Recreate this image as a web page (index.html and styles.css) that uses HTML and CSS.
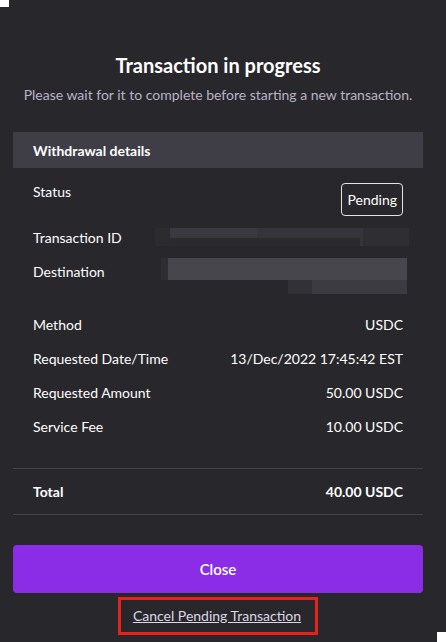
FILE: index.html
```html
<!DOCTYPE html>
<html>
<head>
<meta charset="utf-8">
<link rel="stylesheet" href="styles.css">
</head>
<body>
<div class="corner corner-tl"></div>
<div class="modal">
  <h1 class="title">Transaction in progress</h1>
  <p class="subtitle">Please wait for it to complete before starting a new transaction.</p>
  <div class="section-head">Withdrawal details</div>
  <div class="rows">
    <div class="row row-status">
      <span class="label">Status</span>
      <span class="badge">Pending</span>
    </div>
    <div class="row row-txid">
      <span class="label">Transaction ID</span>
      <span class="blur blur-txid"><i class="b1"></i><i class="b2"></i></span>
    </div>
    <div class="row row-dest">
      <span class="label">Destination</span>
      <span class="blur blur-dest"><i class="d1"></i><i class="d2"></i></span>
    </div>
    <div class="row"><span class="label">Method</span><span class="value">USDC</span></div>
    <div class="row"><span class="label">Requested Date/Time</span><span class="value">13/Dec/2022 17:45:42 EST</span></div>
    <div class="row"><span class="label">Requested Amount</span><span class="value">50.00 USDC</span></div>
    <div class="row"><span class="label">Service Fee</span><span class="value">10.00 USDC</span></div>
  </div>
  <div class="total">
    <span class="label">Total</span>
    <span class="value">40.00 USDC</span>
  </div>
  <button class="close-btn">Close</button>
  <div class="cancel-wrap">
    <a class="cancel" href="#">Cancel Pending Transaction</a>
  </div>
</div>
<div class="corner corner-br"></div>
</body>
</html>
```
FILE: styles.css
```css
html, body {
  margin: 0;
  padding: 0;
}
body {
  width: 446px;
  height: 642px;
  background: #28272c;
  font-family: Lato, "Noto Sans", sans-serif;
  color: #ffffff;
  position: relative;
  overflow: hidden;
}
.corner {
  position: absolute;
  background: #ffffff;
}
.corner-tl { left: 0; top: 0; width: 9px; height: 7px; }
.corner-br { right: 0; bottom: 0; width: 9px; height: 10px; }
.modal {
  padding: 52px 23px 0 13px;
  display: flex;
  flex-direction: column;
}
.title {
  margin: 0;
  text-align: center;
  font-size: 20px;
  font-weight: 700;
  line-height: 26px;
  color: #ffffff;
}
.subtitle {
  margin: 8px 0 0;
  text-align: center;
  font-size: 14px;
  line-height: 18px;
  color: #b9b3c6;
}
.section-head {
  margin-top: 28px;
  height: 36px;
  background: #3f3d46;
  display: flex;
  align-items: center;
  padding-left: 20px;
  font-size: 14px;
  font-weight: 700;
}
.rows {
  padding: 15px 20px 16px 20px;
  display: flex;
  flex-direction: column;
  border-bottom: 1px solid #43424a;
}
.row {
  display: flex;
  justify-content: space-between;
  align-items: flex-start;
  font-size: 14px;
  line-height: 18px;
  height: 34px;
}
.label { color: #ffffff; }
.value { color: #ffffff; }
.row-status { height: 46px; }
.badge {
  margin-top: 0;
  border: 1px solid #e4e2e8;
  border-radius: 4px;
  padding: 7px 5px;
  line-height: 17px;
  font-size: 14px;
}
.row-txid { height: 34px; }
.row-dest { height: 53px; }
.blur {
  display: block;
  position: relative;
}
.blur i { display: block; position: absolute; }
.blur-txid { width: 254px; height: 20px; margin-right: -6px; margin-top: -1px; }
.b1 { left: 0; top: 0; width: 254px; height: 18px; background: linear-gradient(90deg, #2c2b30 0 6%, #3a393f 6% 40%, #35343a 40% 82%, #2f2e33 82%); }
.b2 { left: 15px; top: 10px; width: 190px; height: 8px; background: #2b2a2f; }
.blur-dest { width: 246px; height: 36px; margin-right: -4px; margin-top: -5px; }
.d1 { left: 0; top: 0; width: 246px; height: 22px; background: linear-gradient(90deg, #2e2d32 0 3%, #48464d 3%); }
.d2 { left: 127px; top: 22px; width: 119px; height: 14px; background: linear-gradient(90deg, #323136 0 20%, #3c3b41 20%); }
.total {
  height: 45px;
  display: flex;
  justify-content: space-between;
  align-items: center;
  padding: 0 20px;
  font-size: 14px;
  font-weight: 700;
  border-bottom: 1px solid #43424a;
}
.close-btn {
  margin-top: 30px;
  height: 48px;
  border: none;
  border-radius: 4px;
  background: #8b2de6;
  color: #ffffff;
  font-family: Lato, "Noto Sans", sans-serif;
  font-size: 15px;
  font-weight: 600;
}
.cancel-wrap {
  margin-top: 4px;
  display: flex;
  justify-content: center;
}
.cancel {
  display: block;
  border: 3px solid #e5231b;
  padding: 7px 14px 7px 12px;
  color: #dcd8e3;
  font-size: 14px;
  line-height: 18px;
  text-decoration: underline;
}
```
